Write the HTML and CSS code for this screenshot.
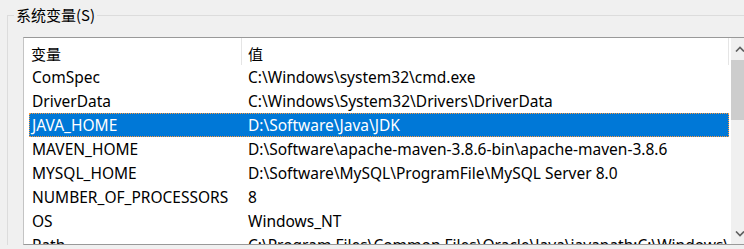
FILE: index.html
```html
<!DOCTYPE html>
<html lang="zh-CN">
  <head>
    <meta charset="UTF-8" />
    <meta name="viewport" content="width=device-width, initial-scale=1.0" />
    <title>系统变量</title>
    <link rel="stylesheet" href="styles.css">
  </head>
  <body>
    <fieldset class="group">
      <legend>系统变量(S)</legend>

      <div class="listbox">
        <div class="list-main">
          <div class="head">
            <div class="col-name">变量</div>
            <div class="col-value">值</div>
          </div>
          <div class="rows">
            <div class="row"><div class="col-name">ComSpec</div><div class="col-value">C:\Windows\system32\cmd.exe</div></div>
            <div class="row"><div class="col-name">DriverData</div><div class="col-value">C:\Windows\System32\Drivers\DriverData</div></div>
            <div class="row selected"><div class="col-name">JAVA_HOME</div><div class="col-value">D:\Software\Java\JDK</div></div>
            <div class="row"><div class="col-name">MAVEN_HOME</div><div class="col-value">D:\Software\apache-maven-3.8.6-bin\apache-maven-3.8.6</div></div>
            <div class="row"><div class="col-name">MYSQL_HOME</div><div class="col-value">D:\Software\MySQL\ProgramFile\MySQL Server 8.0</div></div>
            <div class="row"><div class="col-name">NUMBER_OF_PROCESSORS</div><div class="col-value">8</div></div>
            <div class="row"><div class="col-name">OS</div><div class="col-value">Windows_NT</div></div>
            <div class="row"><div class="col-name">Path</div><div class="col-value">C:\Program Files\Common Files\Oracle\Java\javapath;C:\Windows\system32</div></div>
          </div>
        </div>

        <!-- 세로 스크롤바 -->
        <div class="scrollbar">
          <div class="sb-btn">
            <svg width="10" height="6" viewBox="0 0 10 6"><path d="M1 5.5 L5 1.5 L9 5.5" fill="none" stroke="#606060" stroke-width="1.6" /></svg>
          </div>
          <div class="sb-thumb"></div>
          <div class="sb-track"></div>
          <div class="sb-btn">
            <svg width="10" height="6" viewBox="0 0 10 6"><path d="M1 0.5 L5 4.5 L9 0.5" fill="none" stroke="#606060" stroke-width="1.6" /></svg>
          </div>
        </div>
      </div>
    </fieldset>
  </body>
</html>
```

FILE: styles.css
```css
body {
  margin: 0;
  background-color: #f0f0f0;
  font-family: "Segoe UI", "Noto Sans", "Noto Sans CJK SC", sans-serif;
  font-size: 15.5px;
  color: #000;
  overflow: hidden;
  width: 744px;
  height: 249px;
}

.group {
  margin: 5px 0 0 7px;
  padding: 12px 0 0 6px;
  border: 1px solid #dcdcdc;
  border-right: none;
  border-bottom: none;
  min-width: 0;
  width: 760px;
}
.group legend {
  padding: 0 2px;
  line-height: 20px;
  font-size: 15px;
  font-family: "Noto Sans CJK SC", sans-serif;
}

.listbox {
  margin-left: 9px;
  display: flex;
  height: 206px;
  background-color: #fff;
  border-top: 1px solid #999;
  border-bottom: 1px solid #999;
  border-left: 1px solid #c4c4c4;
  overflow: hidden;
}
.list-main {
  width: 706px;
  flex-shrink: 0;
}

.head,
.row {
  display: flex;
  margin: 0 1px 0 5px;
  white-space: nowrap;
}
.head {
  height: 27px;
  font-size: 15px;
  font-family: "Noto Sans CJK SC", sans-serif;
}
.head .col-name,
.head .col-value {
  height: 27px;
  line-height: 27px;
  padding-top: 2px;
  border-right: 1px solid #e5e5e5;
}
.head .col-name {
  width: 213px;
  padding-left: 2px;
}
.head .col-value {
  flex: 1;
  padding-left: 6px;
}
.col-name,
.col-value {
  box-sizing: border-box;
  overflow: hidden;
}

.row {
  height: 24px;
  line-height: 24px;
}
.row .col-name {
  width: 213px;
  padding-left: 3px;
}
.row .col-value {
  flex: 1;
  padding-left: 6px;
}
.selected {
  background-color: #0078d7;
  color: #fff;
  outline: 1px dotted #ff9a3c;
  outline-offset: -1px;
}

.scrollbar {
  width: 17px;
  flex-shrink: 0;
  margin-left: 1px;
  display: flex;
  flex-direction: column;
  background-color: #f0f0f0;
}
.sb-btn {
  height: 21px;
  display: flex;
  align-items: center;
  justify-content: center;
}
.sb-thumb {
  height: 60px;
  margin-top: 1px;
  background-color: #cdcdcd;
}
.sb-track {
  flex: 1;
}
```
